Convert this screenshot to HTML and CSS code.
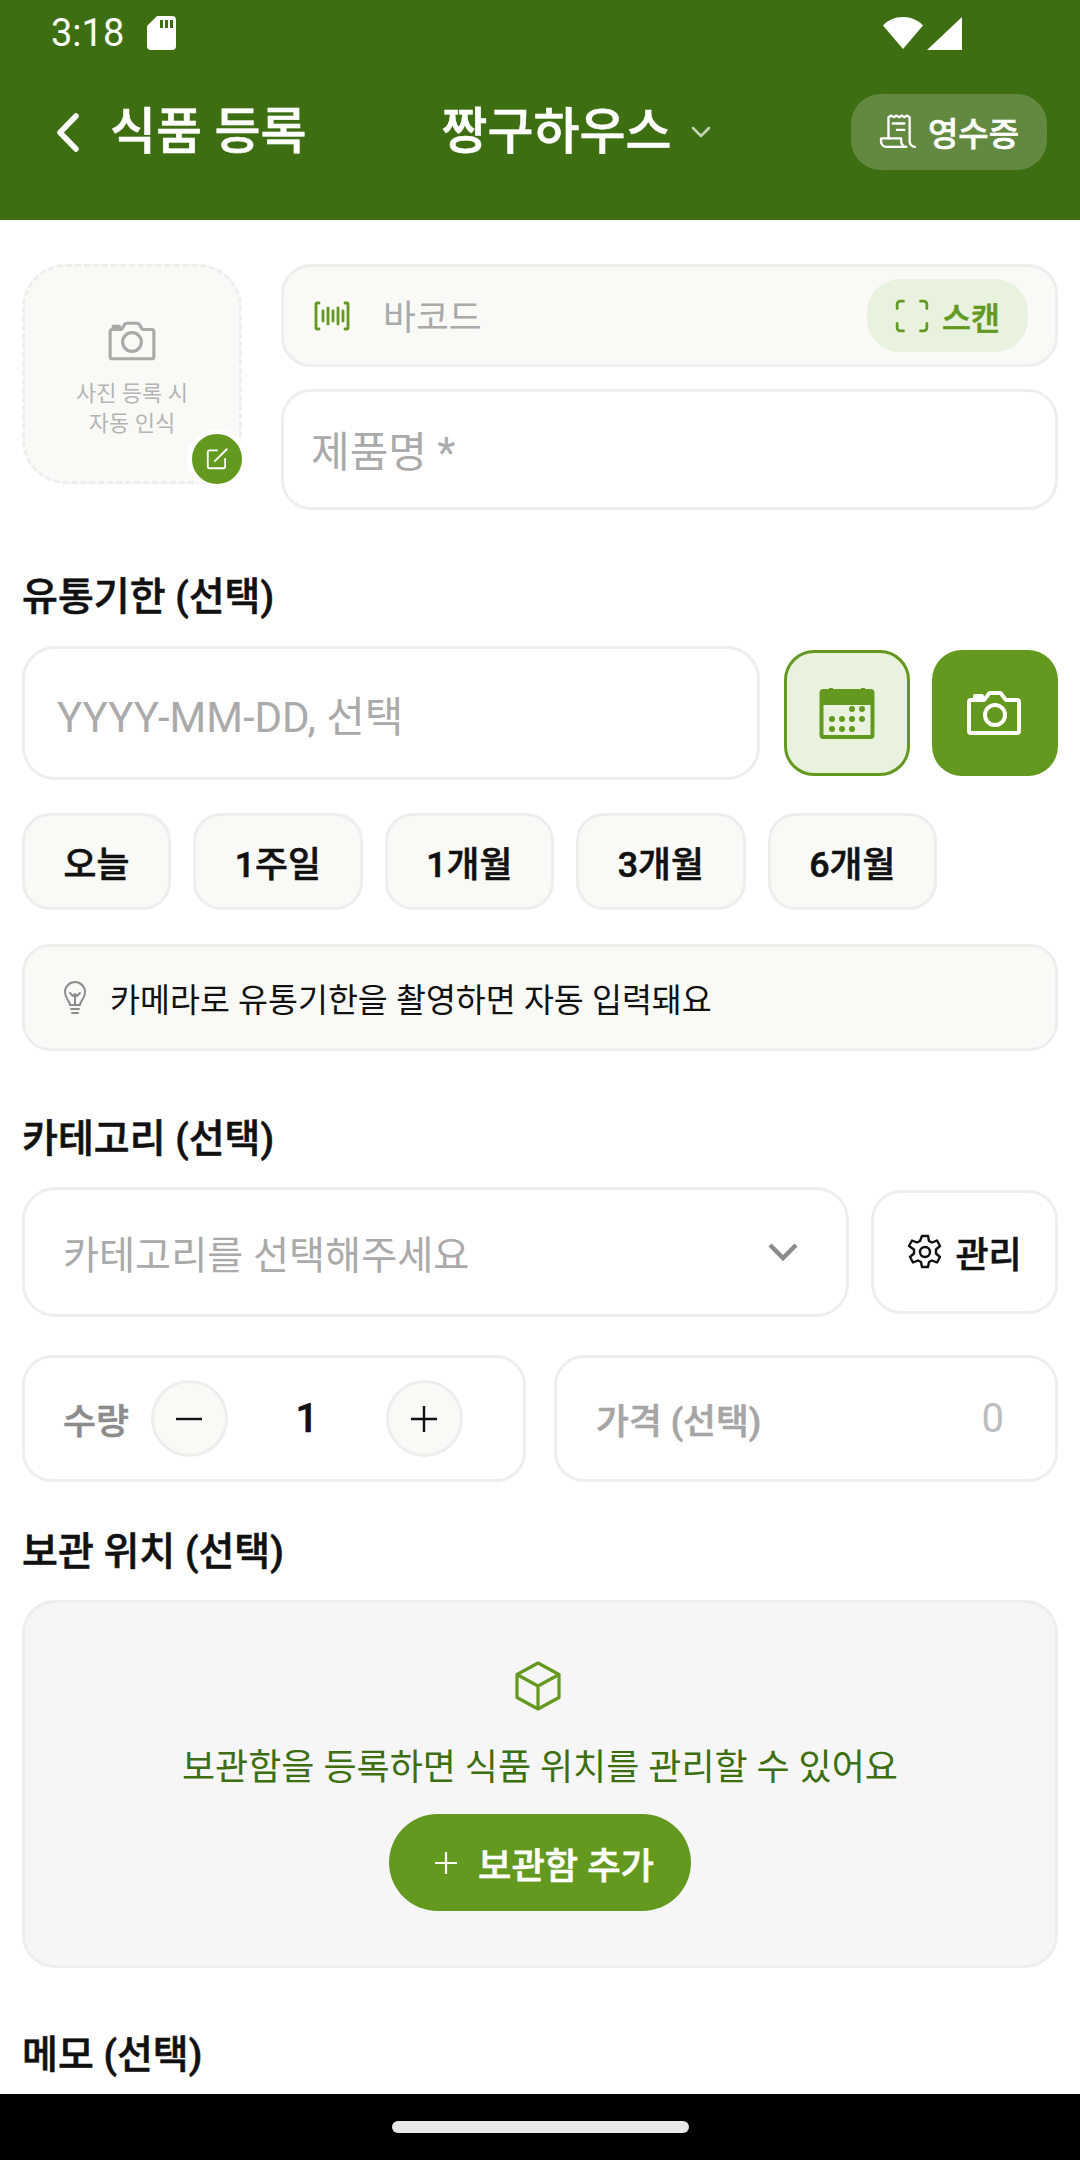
FILE: index.html
```html
<!DOCTYPE html>
<html lang="ko">
<head>
<meta charset="utf-8">
<title>식품 등록</title>
<link rel="stylesheet" href="styles.css">
</head>
<body>
<div class="page">
  <header class="header">
    <div class="status">
      <span class="time">3:18</span>
      <svg class="sd" viewBox="0 0 29 34"><path d="M10 0h15a4 4 0 0 1 4 4v26a4 4 0 0 1-4 4H4a4 4 0 0 1-4-4V10z" fill="#fff"/><path d="M13 4h3v8h-3zM18 4h3v8h-3zM23 4h3v8h-3z" fill="#3d6e11"/></svg>
      <span class="status-gap"></span>
      <svg class="wifi" viewBox="0 0 40 32"><path d="M0 8.500C5 3 12 0 20 0s15 3 20 8.500L20 32z" fill="#fff"/></svg>
      <svg class="signal" viewBox="0 0 35 33"><path d="M35 0v33H0z" fill="#fff"/></svg>
    </div>
    <div class="bar">
      <svg class="back" viewBox="0 0 24 39"><path d="M21 3 5 19.500 21 36" fill="none" stroke="#fff" stroke-width="5.500" stroke-linecap="round" stroke-linejoin="round"/></svg>
      <h1 class="title">식품 등록</h1>
      <div class="home">
        <span class="home-name">짱구하우스</span>
        <svg class="home-arrow" viewBox="0 0 20 12"><path d="M2 2l8 8 8-8" fill="none" stroke="#c4d4b4" stroke-width="2.500" stroke-linecap="round" stroke-linejoin="round"/></svg>
      </div>
      <div class="receipt">
        <svg class="receipt-icon" viewBox="0 0 36 34" fill="none" stroke="#fff" stroke-width="2.200" stroke-linecap="round" stroke-linejoin="round"><path d="M9 23V3l2.500-1.500L14 3l2.500-1.500L19 3l2.500-1.500L24 3l2.500-1.500L29 3v23a5 5 0 0 0 5 5"/><path d="M13 9h11M17 15h7"/><path d="M2 23h19v3a5 5 0 0 0 5 5H7a5 5 0 0 1-5-5z"/></svg>
        <span>영수증</span>
      </div>
    </div>
  </header>

  <main class="main">
    <section class="top">
      <div class="photo">
        <svg class="photo-cam" viewBox="0 0 48 40" fill="none" stroke="#a9a9a9" stroke-width="3" stroke-linejoin="round"><path d="M3 11a2 2 0 0 1 2-2h9l3-5a3 3 0 0 1 2-1h10a3 3 0 0 1 2 1l3 5h9a2 2 0 0 1 2 2v24a2 2 0 0 1-2 2H5a2 2 0 0 1-2-2z"/><circle cx="24" cy="21" r="9"/><path d="M6 8V6h6v2" /></svg>
        <p class="photo-text">사진 등록 시<br>자동 인식</p>
        <span class="photo-badge">
          <svg viewBox="0 0 24 24" fill="none" stroke="#fff" stroke-width="1.700" stroke-linecap="round" stroke-linejoin="round"><path d="M12 4H5a1.500 1.500 0 0 0-1.500 1.500V19A1.500 1.500 0 0 0 5 20.500h13a1.500 1.500 0 0 0 1.500-1.500v-7"/><path d="M10 14 21 3"/></svg>
        </span>
      </div>
      <div class="top-fields">
        <div class="barcode">
          <svg class="barcode-icon" viewBox="0 0 36 30" fill="none" stroke="#64991f" stroke-width="2.800" stroke-linecap="round" stroke-linejoin="round"><path d="M5 2H3a1 1 0 0 0-1 1v24a1 1 0 0 0 1 1h2M31 2h2a1 1 0 0 1 1 1v24a1 1 0 0 1-1 1h-2"/><path d="M9 10v10M14 7v16M19 10v10M24 7v16M29 10v10"/></svg>
          <span class="barcode-text">바코드</span>
          <div class="scan">
            <svg viewBox="0 0 32 32" fill="none" stroke="#64991f" stroke-width="2.600" stroke-linecap="round"><path d="M8 2H5a3 3 0 0 0-3 3v4M24 2h3a3 3 0 0 1 3 3v4M8 30H5a3 3 0 0 1-3-3v-4M24 30h3a3 3 0 0 0 3-3v-4"/></svg>
            <span>스캔</span>
          </div>
        </div>
        <div class="name-field">제품명 *</div>
      </div>
    </section>

    <h2 class="label label-date">유통기한 (선택)</h2>
    <section class="date-row">
      <div class="date-input">YYYY-MM-DD, 선택</div>
      <div class="square square-light">
        <svg viewBox="0 0 56 52"><rect x="2.500" y="4" width="51" height="46" rx="2" fill="none" stroke="#64991f" stroke-width="4"/><path d="M10 1h4v4h-4zM42 1h4v4h-4z" fill="#64991f"/><path d="M4 6h48v12H4z" fill="#64991f"/><g fill="#64991f"><circle cx="33" cy="22" r="3"/><circle cx="43" cy="22" r="3"/><circle cx="13" cy="32" r="3"/><circle cx="23" cy="32" r="3"/><circle cx="33" cy="32" r="3"/><circle cx="43" cy="32" r="3"/><circle cx="13" cy="42" r="3"/><circle cx="23" cy="42" r="3"/><circle cx="33" cy="42" r="3"/></g></svg>
      </div>
      <div class="square square-solid">
        <svg viewBox="0 0 56 44" fill="none" stroke="#fff" stroke-width="4" stroke-linejoin="round"><path d="M2 11a2 2 0 0 1 2-2h13l4-5a3 3 0 0 1 2-2h10a3 3 0 0 1 2 2l4 5h11a2 2 0 0 1 2 2v29a2 2 0 0 1-2 2H4a2 2 0 0 1-2-2z"/><circle cx="28" cy="24" r="10"/><path d="M8 8V5h7v3"/></svg>
      </div>
    </section>

    <section class="chips">
      <span class="chip chip-today">오늘</span>
      <span class="chip">1주일</span>
      <span class="chip">1개월</span>
      <span class="chip">3개월</span>
      <span class="chip">6개월</span>
    </section>

    <section class="tip">
      <svg viewBox="0 0 24 36" fill="none" stroke="#8c8c8c" stroke-width="2" stroke-linecap="round" stroke-linejoin="round"><path d="M7 25c0-4-5-6-5-13a10 10 0 0 1 20 0c0 7-5 9-5 13z"/><path d="M7 13l3 3 2-2 2 2 3-3M12 15v10M8 29h8M9 33h6"/></svg>
      <span>카메라로 유통기한을 촬영하면 자동 입력돼요</span>
    </section>

    <h2 class="label label-cat">카테고리 (선택)</h2>
    <section class="cat-row">
      <div class="select">
        <span>카테고리를 선택해주세요</span>
        <svg viewBox="0 0 32 20"><path d="M3 3l13 13L29 3" fill="none" stroke="#8c8c8c" stroke-width="4.500"/></svg>
      </div>
      <div class="manage">
        <svg viewBox="0 0 36 36" fill="none" stroke="#111" stroke-width="2.400" stroke-linejoin="round"><path d="M15 2h6l1 5 3 1.500 5-2 3 5.500-4 3.500v4l4 3.500-3 5.500-5-2-3 1.500-1 5h-6l-1-5-3-1.500-5 2-3-5.500 4-3.500v-4L2 12l3-5.500 5 2L13 7z"/><circle cx="18" cy="18" r="5"/></svg>
        <span>관리</span>
      </div>
    </section>

    <section class="qty-row">
      <div class="qty">
        <span class="qty-label">수량</span>
        <span class="round"><svg viewBox="0 0 26 26"><path d="M0 13h26" stroke="#111" stroke-width="2.400"/></svg></span>
        <span class="qty-value">1</span>
        <span class="round"><svg viewBox="0 0 26 26"><path d="M0 13h26M13 0v26" stroke="#111" stroke-width="2.400"/></svg></span>
      </div>
      <div class="price">
        <span class="price-label">가격 (선택)</span>
        <span class="price-value">0</span>
      </div>
    </section>

    <h2 class="label label-store">보관 위치 (선택)</h2>
    <section class="storage">
      <svg class="cube" viewBox="0 0 48 50" fill="none" stroke="#64991f" stroke-width="3.200" stroke-linejoin="round"><path d="M24 2 45 13.500v23L24 48 3 36.500v-23z"/><path d="M3 13.500 24 25l21-11.500M24 25v23"/></svg>
      <p class="storage-text">보관함을 등록하면 식품 위치를 관리할 수 있어요</p>
      <div class="add">
        <svg viewBox="0 0 24 24"><path d="M1 12h22M12 1v22" stroke="#fff" stroke-width="2.200"/></svg>
        <span>보관함 추가</span>
      </div>
    </section>

    <h2 class="label label-memo">메모 (선택)</h2>
  </main>

  <footer class="nav"><span class="pill"></span></footer>
</div>
</body>
</html>
```
FILE: styles.css
```css
* { box-sizing: border-box; }
html, body { margin: 0; padding: 0; }
body {
  font-family: Roboto, "Noto Sans CJK KR", sans-serif;
  color: #111;
  background: #fff;
}
h1, h2, p { margin: 0; }
svg { display: block; flex: none; }

/* semi-bold look: medium weight thickened slightly */
.title, .home-name, .receipt, .label, .scan, .chip, .manage, .qty-label, .qty-value, .price-label, .add {
  font-weight: 500;
  -webkit-text-stroke: 0.6px currentColor;
}

.page { display: flex; flex-direction: column; width: 1080px; height: 2160px; overflow: hidden; }

/* header */
.header { height: 220px; flex: none; background: #3d6e11; color: #fff; }
.status { display: flex; align-items: center; height: 66px; padding: 0 118px 0 51px; }
.time { font-size: 38px; line-height: 66px; }
.sd { width: 29px; height: 34px; margin-left: 23px; }
.status-gap { flex: 1; }
.wifi { width: 40px; height: 32px; }
.signal { width: 35px; height: 33px; margin-left: 4px; }
.bar { display: flex; align-items: center; height: 76px; margin-top: 28px; padding: 0 33px 0 55px; }
.back { width: 24px; height: 39px; }
.title { font-size: 50px; line-height: 76px; margin-left: 31px; white-space: nowrap; }
.home { display: flex; align-items: center; margin-left: 135px; }
.home-name { font-size: 50px; line-height: 76px; white-space: nowrap; }
.home-arrow { width: 20px; height: 12px; margin-left: 20px; }
.receipt {
  display: flex; align-items: center; gap: 10px;
  margin-left: auto; width: 196px; height: 76px; padding-left: 27px;
  border-radius: 30px; background: #638941;
  font-size: 33px; white-space: nowrap;
}
.receipt-icon { width: 40px; height: 36px; }

/* main */
.main { flex: 1; min-height: 0; padding: 44px 22px 0; overflow: hidden; }
.label { font-size: 39px; line-height: 54px; color: #111; }
.label-date { margin-top: 60px; }
.label-cat { margin-top: 61px; }
.label-store { margin-top: 43px; }
.label-memo { margin-top: 60px; }

/* photo + barcode */
.top { display: flex; gap: 39px; align-items: flex-start; }
.photo {
  position: relative; flex: none; width: 220px; height: 220px;
  display: flex; flex-direction: column; align-items: center;
  padding-top: 53px;
  background: #f9faf6; border: 3px dashed #eeeeee; border-radius: 44px;
}
.photo-cam { width: 50px; height: 42px; }
.photo-text { margin-top: 17px; font-size: 22px; line-height: 30px; color: #b5b5b5; text-align: center; }
.photo-badge {
  position: absolute; right: -3px; bottom: -3px;
  display: flex; align-items: center; justify-content: center;
  width: 60px; height: 60px; margin: 0 -5px -5px 0;
  background: #64991f; border: 5px solid #fff; border-radius: 50%;
}
.photo-badge svg { width: 26px; height: 26px; }
.top-fields { flex: 1; display: flex; flex-direction: column; gap: 22px; }
.barcode {
  display: flex; align-items: center; height: 103px; padding: 0 27px 0 30px;
  background: #f9faf6; border: 3px solid #eeeeee; border-radius: 30px;
}
.barcode-icon { width: 36px; height: 30px; }
.barcode-text { margin-left: 33px; padding-bottom: 3px; font-size: 35.750px; color: #aaaaaa; }
.scan {
  display: flex; align-items: center; gap: 13px;
  margin-left: auto; height: 73px; padding: 0 28px;
  background: #e9f2df; border-radius: 33px;
  font-size: 31.500px; color: #64991f;
}
.scan svg { width: 34px; height: 34px; }
.name-field {
  display: flex; align-items: center; height: 121px; padding: 0 0 3px 27px;
  background: #fff; border: 3px solid #eeeeee; border-radius: 30px;
  font-size: 42px; color: #aaaaaa;
}

/* date */
.date-row { display: flex; align-items: center; gap: 22px; margin-top: 22px; }
.date-input {
  display: flex; align-items: center; width: 740px; height: 134px; padding-left: 32px;
  background: #fff; border: 3px solid #eeeeee; border-radius: 33px;
  font-size: 42px; color: #aaaaaa; margin-right: 2px;
}
.square { display: flex; align-items: center; justify-content: center; flex: none; width: 126px; height: 126px; border-radius: 30px; }
.square-light { background: #e9f2df; border: 3px solid #64991f; }
.square-light svg { width: 56px; height: 52px; }
.square-solid { background: #64991f; }
.square-solid svg { width: 56px; height: 44px; }

/* chips */
.chips { display: flex; gap: 22px; margin-top: 33px; }
.chip {
  display: flex; align-items: center; justify-content: center;
  width: 169.500px; height: 97px;
  background: #f9faf6; border: 3px solid #eeeeee; border-radius: 28px;
  font-size: 35.750px; color: #111;
}
.chip-today { width: 149px; }

/* tip */
.tip {
  display: flex; align-items: center; height: 107px; margin-top: 34px; padding-left: 38px;
  background: #f9faf6; border: 3px solid #eeeeee; border-radius: 28px;
  font-size: 32.600px; color: #111;
}
.tip svg { width: 24px; height: 36px; margin-right: 23px; }

/* category */
.cat-row { display: flex; align-items: center; gap: 22px; margin-top: 21px; }
.select {
  flex: none; display: flex; align-items: center; justify-content: space-between;
  width: 827px; height: 130px; padding: 0 47px 0 38px;
  background: #fff; border: 3px solid #eeeeee; border-radius: 33px;
  font-size: 39.200px; color: #aaaaaa;
}
.select svg { width: 32px; height: 20px; }
.manage {
  flex: 1; display: flex; align-items: center; justify-content: center; gap: 12px;
  height: 124px;
  background: #fff; border: 3px solid #eeeeee; border-radius: 30px;
  font-size: 36px; color: #111;
}
.manage svg { width: 36px; height: 36px; }

/* quantity & price */
.qty-row { display: grid; grid-template-columns: 1fr 1fr; gap: 28px; margin-top: 38px; }
.qty, .price {
  display: flex; align-items: center; height: 127px;
  background: #fff; border: 3px solid #eeeeee; border-radius: 30px;
}
.qty { padding-left: 38px; }
.qty-label { font-size: 35.750px; color: #8c8c8c; margin-right: 22px; }
.round {
  flex: none; display: flex; align-items: center; justify-content: center;
  width: 77px; height: 77px;
  background: #f9faf6; border: 3px solid #eeeeee; border-radius: 50%;
}
.round svg { width: 26px; height: 26px; }
.qty-value { width: 158px; text-align: center; font-size: 40px; color: #111; }
.price { justify-content: space-between; padding: 0 51px 0 39px; }
.price-label { font-size: 35.750px; color: #a6a6a6; }
.price-value { font-size: 40px; color: #bcbcbc; }

/* storage */
.storage {
  display: flex; flex-direction: column; align-items: center;
  height: 368px; margin-top: 21px; padding-top: 58px;
  background: #f6f6f6; border: 3px solid #eeeeee; border-radius: 33px;
}
.cube { width: 48px; height: 50px; margin-right: 5px; }
.storage-text { margin-top: 30px; font-size: 36px; line-height: 54px; color: #3d6e11; }
.add {
  display: flex; align-items: center; gap: 20px;
  width: 302px; height: 97px; margin-top: 19px; padding-left: 45px;
  background: #64991f; border-radius: 49px;
  font-size: 36.300px; color: #fff;
}
.add svg { width: 24px; height: 24px; }

/* nav */
.nav { flex: none; display: flex; justify-content: center; height: 66px; padding-top: 27px; background: #000; }
.pill { width: 297px; height: 12px; background: #e8e8e8; border-radius: 6px; }
```
